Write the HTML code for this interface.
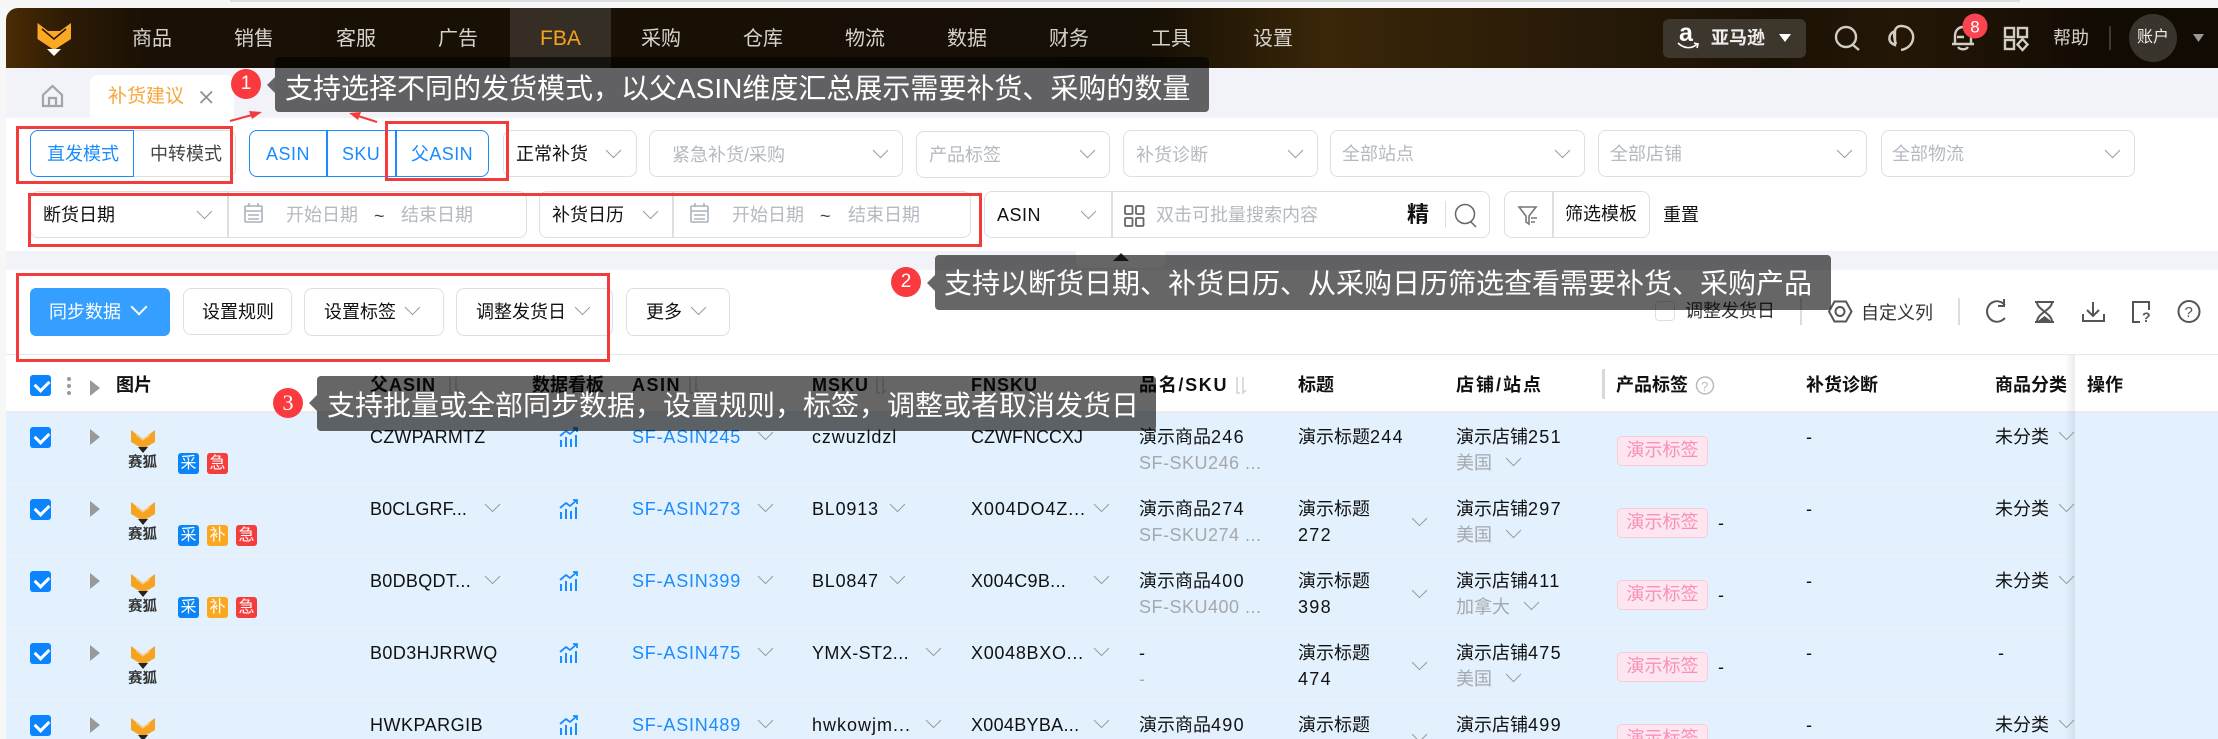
<!DOCTYPE html>
<html lang="zh"><head><meta charset="utf-8"><title>补货建议</title>
<style>
*{box-sizing:border-box;margin:0;padding:0}
html,body{width:2218px;height:739px;overflow:hidden;background:#f7f7f8;font-family:"Liberation Sans","Noto Sans CJK SC",sans-serif;color:#111}
.a,.t,.b,.c,.r,.rb,.tp,.tt,.n{position:absolute}
.t{white-space:nowrap;line-height:24px;height:24px;font-size:18px}
.t em{font-style:normal;letter-spacing:1.3px}
.b{border:1.5px solid #dcdfe6;border-radius:8px;background:#fff}
.c{width:11px;height:11px;border-right:1.8px solid #999;border-bottom:1.8px solid #999;transform:rotate(45deg)}
.g{color:#b4b9c0}
.w{font-weight:700;color:#111}
.l{color:#1a8cff;letter-spacing:.8px}
.s{color:#a5a8ad}
.r{left:6px;width:2212px;height:72px;background:#e2f1fd;border-bottom:2px solid #edf0f4}
.ck{position:absolute;left:24px;width:21px;height:21px;border-radius:3px;background:#0a84ff}
.ck:after{content:"";position:absolute;left:5px;top:3px;width:11px;height:7px;border-left:3px solid #fff;border-bottom:3px solid #fff;transform:rotate(-45deg) translate(-1px,1px)}
.tri{position:absolute;left:84px;width:0;height:0;border-left:10px solid #999;border-top:8px solid transparent;border-bottom:8px solid transparent}
.im{position:absolute;left:110px;top:10px;width:54px;height:54px;border:1px solid #e9eef3}
.im b{position:absolute;left:11px;top:29px;font-size:14.5px;line-height:20px;color:#333;white-space:nowrap}
.im svg{position:absolute;left:13px;top:5px}
.tg{position:absolute;top:40px;width:21px;height:21px;border-radius:3px;color:#fff;font-size:16px;line-height:21px;text-align:center}
.pk{position:absolute;left:1611px;top:23px;width:91px;height:30px;background:#fde6f0;border:1.5px solid #fcc9dd;border-radius:5px;color:#f78fb9;font-size:18px;line-height:27px;text-align:center}
.tp{background:#666;mix-blend-mode:multiply;border-radius:4px}
.tt{color:#fff;font-size:28px;line-height:40px;height:40px;white-space:nowrap}
.n{width:30px;height:30px;border-radius:50%;background:#fa3a3e;color:#fff;text-align:center;font-size:19px;line-height:30px}
.rb{border:3px solid #f33b3b}
</style></head><body>

<div class="a" style="left:230px;top:0;width:1790px;height:2px;background:#ddd"></div>
<div class="a" style="left:6px;top:8px;width:2212px;height:60px;border-top-left-radius:12px;background:linear-gradient(90deg,#4a2c05 0,#2c1b05 60px,#1a1005 140px,#160f05 1140px,#3a2608 1320px,#2a1c08 1540px,#1a1105 1770px,#241706 1890px,#120b03 2100px)"></div>
<div class="a" style="left:510px;top:8px;width:101px;height:60px;background:rgba(255,255,255,.13)"></div>
<div style="color:#d6d3cd;font-size:20px">
<span class="t" style="font-size:20px;left:132px;top:27px">商品</span>
<span class="t" style="font-size:20px;left:234px;top:27px">销售</span>
<span class="t" style="font-size:20px;left:336px;top:27px">客服</span>
<span class="t" style="font-size:20px;left:438px;top:27px">广告</span>
<span class="t" style="font-size:21px;left:540px;top:27px;color:#f6a31e">FBA</span>
<span class="t" style="font-size:20px;left:641px;top:27px">采购</span>
<span class="t" style="font-size:20px;left:743px;top:27px">仓库</span>
<span class="t" style="font-size:20px;left:845px;top:27px">物流</span>
<span class="t" style="font-size:20px;left:947px;top:27px">数据</span>
<span class="t" style="font-size:20px;left:1049px;top:27px">财务</span>
<span class="t" style="font-size:20px;left:1151px;top:27px">工具</span>
<span class="t" style="font-size:20px;left:1253px;top:27px">设置</span>
</div>
<div class="a" style="left:1663px;top:19px;width:143px;height:39px;border-radius:6px;background:#3d362c"></div>
<span class="t" style="left:1711px;top:26px;color:#eee;font-weight:700">亚马逊</span>
<span class="t" style="left:1679px;top:18px;color:#fff;font-weight:700;font-size:25px;line-height:30px;height:30px">a</span>
<span class="t" style="left:2053px;top:26px;color:#d6d3cd">帮助</span>
<div class="a" style="left:2129px;top:14px;width:48px;height:48px;border-radius:50%;background:#3a352c"></div>
<span class="t" style="left:2137px;top:26px;color:#eee;font-size:16px">账户</span>

<!-- tab bar -->
<div class="a" style="left:6px;top:68px;width:2212px;height:50px;background:#f1f3f8"></div>
<div class="a" style="left:90px;top:75px;width:144px;height:43px;background:#fff;border-radius:8px 8px 0 0"></div>
<span class="t" style="left:108px;top:85px;font-size:19px;color:#f6a73a">补货建议</span>

<!-- filters -->
<div class="a" style="left:6px;top:118px;width:2212px;height:133px;background:#fff"></div>
<div class="a" style="left:6px;top:251px;width:2212px;height:19px;background:#f1f3f8"></div>
<div class="a" style="left:1076px;top:251px;width:89px;height:17px;background:#fff;border-radius:0 0 8px 8px"></div>
<div class="a" style="left:1113px;top:253px;border-left:8px solid transparent;border-right:8px solid transparent;border-bottom:8px solid #333"></div>

<div class="b" style="left:30px;top:130px;width:206px;height:47px"></div>
<div class="a" style="left:30px;top:130px;width:104px;height:47px;border:1.5px solid #1a8cff;border-radius:8px 0 0 8px"></div>
<span class="t l" style="left:47px;top:142px;letter-spacing:0">直发模式</span>
<span class="t" style="left:150px;top:142px;color:#444">中转模式</span>
<div class="a" style="left:249px;top:130px;width:240px;height:47px;border:1.5px solid #1a8cff;border-radius:8px"></div>
<div class="a" style="left:326px;top:130px;width:1.5px;height:47px;background:#1a8cff"></div>
<div class="a" style="left:395px;top:130px;width:1.5px;height:47px;background:#1a8cff"></div>
<span class="t l" style="left:266px;top:142px;letter-spacing:.5px">ASIN</span>
<span class="t l" style="left:342px;top:142px;letter-spacing:.4px">SKU</span>
<span class="t l" style="left:411px;top:142px;letter-spacing:.4px">父ASIN</span>

<div class="b" style="left:503px;top:130px;width:134px;height:47px"></div><span class="t" style="left:516px;top:142px">正常补货</span><i class="c" style="left:608px;top:145px"></i>
<div class="b" style="left:649px;top:130px;width:254px;height:47px"></div><span class="t g" style="left:672px;top:143px">紧急补货/采购</span><i class="c" style="left:875px;top:145px"></i>
<div class="b" style="left:916px;top:131px;width:194px;height:47px"></div><span class="t g" style="left:929px;top:143px">产品标签</span><i class="c" style="left:1082px;top:145px"></i>
<div class="b" style="left:1123px;top:130px;width:195px;height:47px"></div><span class="t g" style="left:1136px;top:143px">补货诊断</span><i class="c" style="left:1290px;top:145px"></i>
<div class="b" style="left:1330px;top:130px;width:255px;height:47px"></div><span class="t g" style="left:1342px;top:142px">全部站点</span><i class="c" style="left:1557px;top:145px"></i>
<div class="b" style="left:1598px;top:130px;width:269px;height:47px"></div><span class="t g" style="left:1610px;top:142px">全部店铺</span><i class="c" style="left:1839px;top:145px"></i>
<div class="b" style="left:1881px;top:130px;width:254px;height:47px"></div><span class="t g" style="left:1892px;top:142px">全部物流</span><i class="c" style="left:2107px;top:145px"></i>

<div class="b" style="left:30px;top:191px;width:497px;height:47px"></div>
<div class="a" style="left:227px;top:191px;width:1.5px;height:47px;background:#dcdfe6"></div>
<span class="t" style="left:43px;top:203px">断货日期</span><i class="c" style="left:199px;top:206px"></i>
<span class="t g" style="left:286px;top:203px">开始日期</span><span class="t" style="left:374px;top:204px;color:#444">~</span><span class="t g" style="left:401px;top:203px">结束日期</span>

<div class="b" style="left:539px;top:191px;width:432px;height:47px"></div>
<div class="a" style="left:672px;top:191px;width:1.5px;height:47px;background:#dcdfe6"></div>
<span class="t" style="left:552px;top:203px">补货日历</span><i class="c" style="left:645px;top:206px"></i>
<span class="t g" style="left:732px;top:203px">开始日期</span><span class="t" style="left:820px;top:204px;color:#444">~</span><span class="t g" style="left:848px;top:203px">结束日期</span>

<div class="b" style="left:984px;top:191px;width:506px;height:47px"></div>
<div class="a" style="left:1111px;top:191px;width:1.5px;height:47px;background:#dcdfe6"></div>
<div class="a" style="left:1445px;top:201px;width:1px;height:27px;background:#ddd"></div>
<span class="t" style="left:997px;top:203px;letter-spacing:.5px">ASIN</span><i class="c" style="left:1083px;top:206px"></i>
<span class="t g" style="left:1156px;top:203px">双击可批量搜索内容</span>
<span class="t" style="left:1407px;top:203px;font-size:22px;color:#111;font-weight:700">精</span>

<div class="b" style="left:1504px;top:191px;width:146px;height:47px"></div>
<div class="a" style="left:1552px;top:191px;width:1.5px;height:47px;background:#dcdfe6"></div>
<span class="t" style="left:1565px;top:202px">筛选模板</span>
<span class="t" style="left:1663px;top:203px">重置</span>

<!-- toolbar -->
<div class="a" style="left:6px;top:270px;width:2212px;height:85px;background:#fff;border-bottom:1.5px solid #e6e8ec"></div>
<div class="a" style="left:30px;top:288px;width:140px;height:48px;background:#349fff;border-radius:6px"></div>
<span class="t" style="left:49px;top:300px;color:#fff">同步数据</span>
<i class="c" style="left:133px;top:301px;border-color:#fff;width:12px;height:12px;border-width:2px"></i>
<div class="b" style="left:183px;top:288px;width:109px;height:47px"></div><span class="t" style="left:202px;top:300px">设置规则</span>
<div class="b" style="left:304px;top:288px;width:140px;height:48px"></div><span class="t" style="left:324px;top:300px">设置标签</span><i class="c" style="left:407px;top:302px"></i>
<div class="b" style="left:456px;top:288px;width:157px;height:48px"></div><span class="t" style="left:476px;top:300px">调整发货日</span><i class="c" style="left:577px;top:302px"></i>
<div class="b" style="left:626px;top:288px;width:104px;height:48px"></div><span class="t" style="left:646px;top:300px">更多</span><i class="c" style="left:693px;top:302px"></i>
<div class="b" style="left:1655px;top:301px;width:20px;height:20px;border-radius:4px"></div>
<span class="t" style="left:1685px;top:299px;color:#333">调整发货日</span>
<div class="a" style="left:1800px;top:298px;width:1.5px;height:27px;background:#ddd"></div>
<span class="t" style="left:1861px;top:301px;color:#333">自定义列</span>
<div class="a" style="left:1958px;top:298px;width:1.5px;height:27px;background:#ddd"></div>

<!-- table header -->
<div class="a" style="left:6px;top:355px;width:2212px;height:58px;background:#fff;border-bottom:2.5px solid #e9ebee"></div>
<div class="ck" style="left:30px;top:375px"></div>
<div class="a" style="left:67px;top:377px;width:4px;height:4px;border-radius:50%;background:#999;box-shadow:0 7px #999,0 14px #999"></div>
<div class="tri" style="left:90px;top:380px"></div>
<span class="t w" style="left:116px;top:373px">图片</span>
<span class="t w" style="left:370px;top:373px;letter-spacing:1px">父ASIN</span>
<span class="t w" style="left:532px;top:373px">数据看板</span>
<span class="t w" style="left:632px;top:373px;letter-spacing:1.5px">ASIN</span>
<span class="t w" style="left:812px;top:373px;letter-spacing:1px">MSKU</span>
<span class="t w" style="left:971px;top:373px;letter-spacing:1px">FNSKU</span>
<span class="t w" style="left:1139px;top:373px;letter-spacing:1.7px">品名/SKU</span>
<span class="t w" style="left:1298px;top:373px">标题</span>
<span class="t w" style="left:1456px;top:373px;letter-spacing:2px">店铺/站点</span>
<div class="a" style="left:1602px;top:369px;width:2.5px;height:30px;background:#d5d8dc"></div>
<span class="t w" style="left:1616px;top:373px">产品标签</span>
<span class="t w" style="left:1806px;top:373px">补货诊断</span>
<span class="t w" style="left:1995px;top:373px">商品分类</span>

<!-- rows: offsets inside row = page x - 6 -->
<div class="r" style="top:413px">
 <div class="ck" style="top:14px"></div><div class="tri" style="top:16px"></div>
 <div class="im"><svg width="26" height="25" viewBox="0 0 26 25"><path d="M1 1 13 10 25 1V13L13 20 1 13Z" fill="#f6a321"/><path d="M6 6 13 11 20 6" fill="none" stroke="#fbd28e" stroke-width="1"/><path d="M8 18H18L13 24Z" fill="#222"/></svg><b>赛狐</b></div>
 <span class="tg" style="left:172px;background:#0a84f6">采</span><span class="tg" style="left:201px;background:#f43d3d">急</span>
 <span class="t" style="left:364px;top:12px;letter-spacing:.2px">CZWPARMTZ</span>
 <svg class="a" style="left:553px;top:14px" width="20" height="21" viewBox="0 0 20 21"><use href="#ch"/></svg>
 <span class="t l" style="left:626px;top:12px">SF-ASIN245</span><i class="c" style="left:754px;top:14px"></i>
 <span class="t" style="left:806px;top:12px;letter-spacing:.9px">czwuzldzl</span>
 <span class="t" style="left:965px;top:12px">CZWFNCCXJ</span>
 <span class="t" style="left:1133px;top:12px">演示商品<em>246</em></span><span class="t s" style="left:1133px;top:38px;letter-spacing:.5px">SF-SKU246 ...</span>
 <span class="t" style="left:1292px;top:12px">演示标题<em>244</em></span>
 <span class="t" style="left:1450px;top:12px">演示店铺<em>251</em></span><span class="t s" style="left:1450px;top:38px">美国</span><i class="c" style="left:1502px;top:40px"></i>
 <div class="pk">演示标签</div>
 <span class="t" style="left:1800px;top:12px">-</span>
 <span class="t" style="left:1989px;top:12px">未分类</span><i class="c" style="left:2055px;top:14px"></i>
</div>
<div class="r" style="top:485px">
 <div class="ck" style="top:14px"></div><div class="tri" style="top:16px"></div>
 <div class="im"><svg width="26" height="25" viewBox="0 0 26 25"><path d="M1 1 13 10 25 1V13L13 20 1 13Z" fill="#f6a321"/><path d="M6 6 13 11 20 6" fill="none" stroke="#fbd28e" stroke-width="1"/><path d="M8 18H18L13 24Z" fill="#222"/></svg><b>赛狐</b></div>
 <span class="tg" style="left:172px;background:#0a84f6">采</span><span class="tg" style="left:201px;background:#fba81e">补</span><span class="tg" style="left:230px;background:#f43d3d">急</span>
 <span class="t" style="left:364px;top:12px;letter-spacing:.1px">B0CLGRF...</span><i class="c" style="left:481px;top:14px"></i>
 <svg class="a" style="left:553px;top:14px" width="20" height="21" viewBox="0 0 20 21"><use href="#ch"/></svg>
 <span class="t l" style="left:626px;top:12px">SF-ASIN273</span><i class="c" style="left:754px;top:14px"></i>
 <span class="t" style="left:806px;top:12px;letter-spacing:.8px">BL0913</span><i class="c" style="left:886px;top:14px"></i>
 <span class="t" style="left:965px;top:12px;letter-spacing:.9px">X004DO4Z...</span><i class="c" style="left:1090px;top:14px"></i>
 <span class="t" style="left:1133px;top:12px">演示商品<em>274</em></span><span class="t s" style="left:1133px;top:38px;letter-spacing:.5px">SF-SKU274 ...</span>
 <span class="t" style="left:1292px;top:12px">演示标题</span><span class="t" style="left:1292px;top:38px;letter-spacing:1.3px">272</span><i class="c" style="left:1408px;top:28px"></i>
 <span class="t" style="left:1450px;top:12px">演示店铺<em>297</em></span><span class="t s" style="left:1450px;top:38px">美国</span><i class="c" style="left:1502px;top:40px"></i>
 <div class="pk">演示标签</div><span class="t" style="left:1712px;top:26px">-</span>
 <span class="t" style="left:1800px;top:12px">-</span>
 <span class="t" style="left:1989px;top:12px">未分类</span><i class="c" style="left:2055px;top:14px"></i>
</div>
<div class="r" style="top:557px">
 <div class="ck" style="top:14px"></div><div class="tri" style="top:16px"></div>
 <div class="im"><svg width="26" height="25" viewBox="0 0 26 25"><path d="M1 1 13 10 25 1V13L13 20 1 13Z" fill="#f6a321"/><path d="M6 6 13 11 20 6" fill="none" stroke="#fbd28e" stroke-width="1"/><path d="M8 18H18L13 24Z" fill="#222"/></svg><b>赛狐</b></div>
 <span class="tg" style="left:172px;background:#0a84f6">采</span><span class="tg" style="left:201px;background:#fba81e">补</span><span class="tg" style="left:230px;background:#f43d3d">急</span>
 <span class="t" style="left:364px;top:12px;letter-spacing:.3px">B0DBQDT...</span><i class="c" style="left:481px;top:14px"></i>
 <svg class="a" style="left:553px;top:14px" width="20" height="21" viewBox="0 0 20 21"><use href="#ch"/></svg>
 <span class="t l" style="left:626px;top:12px">SF-ASIN399</span><i class="c" style="left:754px;top:14px"></i>
 <span class="t" style="left:806px;top:12px;letter-spacing:.8px">BL0847</span><i class="c" style="left:886px;top:14px"></i>
 <span class="t" style="left:965px;top:12px;letter-spacing:.3px">X004C9B...</span><i class="c" style="left:1090px;top:14px"></i>
 <span class="t" style="left:1133px;top:12px">演示商品<em>400</em></span><span class="t s" style="left:1133px;top:38px;letter-spacing:.5px">SF-SKU400 ...</span>
 <span class="t" style="left:1292px;top:12px">演示标题</span><span class="t" style="left:1292px;top:38px;letter-spacing:1.3px">398</span><i class="c" style="left:1408px;top:28px"></i>
 <span class="t" style="left:1450px;top:12px">演示店铺<em>411</em></span><span class="t s" style="left:1450px;top:38px">加拿大</span><i class="c" style="left:1520px;top:40px"></i>
 <div class="pk">演示标签</div><span class="t" style="left:1712px;top:26px">-</span>
 <span class="t" style="left:1800px;top:12px">-</span>
 <span class="t" style="left:1989px;top:12px">未分类</span><i class="c" style="left:2055px;top:14px"></i>
</div>
<div class="r" style="top:629px">
 <div class="ck" style="top:14px"></div><div class="tri" style="top:16px"></div>
 <div class="im"><svg width="26" height="25" viewBox="0 0 26 25"><path d="M1 1 13 10 25 1V13L13 20 1 13Z" fill="#f6a321"/><path d="M6 6 13 11 20 6" fill="none" stroke="#fbd28e" stroke-width="1"/><path d="M8 18H18L13 24Z" fill="#222"/></svg><b>赛狐</b></div>
 <span class="t" style="left:364px;top:12px;letter-spacing:.4px">B0D3HJRRWQ</span>
 <svg class="a" style="left:553px;top:14px" width="20" height="21" viewBox="0 0 20 21"><use href="#ch"/></svg>
 <span class="t l" style="left:626px;top:12px">SF-ASIN475</span><i class="c" style="left:754px;top:14px"></i>
 <span class="t" style="left:806px;top:12px;letter-spacing:.4px">YMX-ST2...</span><i class="c" style="left:922px;top:14px"></i>
 <span class="t" style="left:965px;top:12px;letter-spacing:.7px">X0048BXO...</span><i class="c" style="left:1090px;top:14px"></i>
 <span class="t" style="left:1133px;top:12px">-</span><span class="t s" style="left:1133px;top:38px">-</span>
 <span class="t" style="left:1292px;top:12px">演示标题</span><span class="t" style="left:1292px;top:38px;letter-spacing:1.3px">474</span><i class="c" style="left:1408px;top:28px"></i>
 <span class="t" style="left:1450px;top:12px">演示店铺<em>475</em></span><span class="t s" style="left:1450px;top:38px">美国</span><i class="c" style="left:1502px;top:40px"></i>
 <div class="pk">演示标签</div><span class="t" style="left:1712px;top:26px">-</span>
 <span class="t" style="left:1800px;top:12px">-</span>
 <span class="t" style="left:1992px;top:12px">-</span>
</div>
<div class="r" style="top:701px;height:38px;border:0;overflow:hidden">
 <div class="ck" style="top:14px"></div><div class="tri" style="top:16px"></div>
 <div class="im"><svg width="26" height="25" viewBox="0 0 26 25"><path d="M1 1 13 10 25 1V13L13 20 1 13Z" fill="#f6a321"/><path d="M6 6 13 11 20 6" fill="none" stroke="#fbd28e" stroke-width="1"/><path d="M8 18H18L13 24Z" fill="#222"/></svg></div>
 <span class="t" style="left:364px;top:12px;letter-spacing:.5px">HWKPARGIB</span>
 <svg class="a" style="left:553px;top:14px" width="20" height="21" viewBox="0 0 20 21"><use href="#ch"/></svg>
 <span class="t l" style="left:626px;top:12px">SF-ASIN489</span><i class="c" style="left:754px;top:14px"></i>
 <span class="t" style="left:806px;top:12px;letter-spacing:1px">hwkowjm...</span><i class="c" style="left:922px;top:14px"></i>
 <span class="t" style="left:965px;top:12px;letter-spacing:.3px">X004BYBA...</span><i class="c" style="left:1090px;top:14px"></i>
 <span class="t" style="left:1133px;top:12px">演示商品<em>490</em></span>
 <span class="t" style="left:1292px;top:12px">演示标题</span><i class="c" style="left:1408px;top:28px"></i>
 <span class="t" style="left:1450px;top:12px">演示店铺<em>499</em></span>
 <div class="pk">演示标签</div>
 <span class="t" style="left:1800px;top:12px">-</span>
 <span class="t" style="left:1989px;top:12px">未分类</span><i class="c" style="left:2055px;top:14px"></i>
</div>

<!-- fixed column -->
<div class="a" style="left:2065px;top:355px;width:10px;height:384px;background:linear-gradient(90deg,rgba(120,130,150,0),rgba(120,130,150,.16))"></div>
<div class="a" style="left:2075px;top:355px;width:143px;height:58px;background:#fff;border-bottom:2.5px solid #e9ebee"></div>
<div class="a" style="left:2075px;top:413px;width:143px;height:326px;background:#e2f1fd"></div>
<span class="t w" style="left:2087px;top:373px">操作</span>

<!-- icons in page coordinates -->
<svg class="a" style="left:0;top:0" width="2218" height="739" viewBox="0 0 2218 739" fill="none">
 <defs><g id="ch" fill="none" stroke="#1a8cff" stroke-width="1.8"><path d="M1 9 7 4 11 7 18 1M14 1H18V5"/><path d="M2 13V20M7 10V20M12 12V20M17 8V20" stroke-width="2"/></g></defs>
 <!-- logo -->
 <path d="M37.5 23 48 31H60L71 23V39L54 50 37.5 39Z" fill="#fba824"/>
 <path d="M42 29 54 39 66 29" stroke="#2a1a05" stroke-width="1.6"/>
 <path d="M47 49H61L54 56Z" fill="#fff"/>
 <!-- header icons -->
 <path d="M1678 43C1684 49 1692 49 1697 44M1694 43 1698 44 1697 48" stroke="#fff" stroke-width="1.6"/>
 <path d="M1779 34H1791L1785 42Z" fill="#fff"/>
 <path d="M2193 34H2204L2198.5 42Z" fill="#999"/>
 <g stroke="#d2cec6" stroke-width="2.4">
  <circle cx="1846" cy="37" r="10"/><path d="M1853 45 1859 50"/>
  <path d="M1896 44C1892 33 1895 26 1901 26C1909 26 1914 32 1913 39C1912 45 1907 49 1901 50"/>
  <path d="M1895 31C1888 34 1887 42 1895 45V31Z"/>
  <path d="M1952 44H1974M1955 44V36C1955 24 1971 24 1971 36V44M1957 37H1964M1958 47C1960 50 1966 50 1968 47"/>
  <rect x="2005" y="28" width="9" height="9"/><rect x="2018" y="28" width="9" height="9"/><rect x="2005" y="40" width="9" height="9"/><path d="M2022.5 39 2027.5 44.500 2022.5 50 2017.500 44.500Z"/>
 </g>
 <circle cx="1975" cy="26" r="12.500" fill="#fb4450"/>
 <text x="1975" y="32.500" text-anchor="middle" font-size="17" font-family="Liberation Sans" fill="#fff">8</text>
 <path d="M2110 26V50" stroke="#6a655c"/>
 <!-- tab icons -->
 <g stroke="#a2a4a8" stroke-width="2.2"><path d="M43 95 52.500 86 62 95V106H43ZM49 106V98H56V106"/></g>
 <path d="M200.500 91.500 212 103M212 91.500 200.500 103" stroke="#8a9099" stroke-width="1.7"/>
 <!-- calendars -->
 <g stroke="#aab2ba" stroke-width="1.6">
  <rect x="245" y="206" width="17" height="16" rx="1"/><path d="M245 211H262M249 203V207M258 203V207M248 215H259M248 219H259" />
  <rect x="691" y="206" width="17" height="16" rx="1"/><path d="M691 211H708M695 203V207M704 203V207M694 215H705M694 219H705"/>
 </g>
 <!-- search grid -->
 <g stroke="#666" stroke-width="1.8"><rect x="1125" y="206" width="7.500" height="8" rx="1"/><rect x="1136" y="206" width="7.500" height="8" rx="1"/><rect x="1125" y="218" width="7.500" height="8" rx="1"/><rect x="1136" y="218" width="7.500" height="8" rx="1"/></g>
 <g stroke="#666" stroke-width="1.5"><circle cx="1465" cy="214" r="9.500"/><path d="M1471 222 1476 227"/></g>
 <!-- filter -->
 <path d="M1519 207H1536L1529 216V224L1526 222V216Z" stroke="#777" stroke-width="1.6"/><path d="M1531 218H1537M1531 222H1535" stroke="#777" stroke-width="1.6"/>
 <!-- toolbar icons -->
 <g stroke="#555" stroke-width="2">
  <path d="M1834.500 301.500H1846L1851.500 311.500 1846 321.500H1834.500L1829 311.500Z"/><circle cx="1840" cy="311.500" r="4.500"/>
  <path d="M2005 305C1997 297 1987 303 1987 311.500C1987 320 1997 326 2005 318M2004 299V306H1998"/>
  <path d="M2035 302H2054M2035 322H2054M2037 302C2037 310 2052 313 2052 322H2037C2037 313 2052 310 2052 302"/>
  <path d="M2093 302V315M2087 310 2093 316 2099 310M2083 314V321H2104V314"/>
  <path d="M2144 302H2133V322H2140M2149 310V302H2144"/>
  <circle cx="2189" cy="311.500" r="10.500"/>
 </g>
 <path d="M2044.500 316 2038 321H2051Z" fill="#555"/>
 <text x="2142" y="322" font-size="14" font-family="Liberation Sans" fill="#555" font-weight="700">?</text>
 <text x="2184.500" y="317" font-size="15" font-family="Liberation Sans" fill="#555">?</text>
 <!-- help small -->
 <circle cx="1705" cy="385.500" r="8.500" stroke="#bbb" stroke-width="1.5"/>
 <text x="1701" y="391" font-size="13" font-family="Liberation Sans" fill="#bbb">?</text>
 <!-- sort icons -->
 <g stroke="#d0d2d6" stroke-width="1.5">
  <path d="M450 377V393H453M456 377V393L459 390" /><path d="M690 377V393H693M696 377V393L699 390"/><path d="M877 377V393H880M883 377V393L886 390"/><path d="M1237 377V393H1240M1243 377V393L1246 390"/>
 </g>
</svg>

<!-- tooltips -->
<div class="tp" style="left:275px;top:57px;width:934px;height:55px"></div>
<div class="tp" style="left:935px;top:255px;width:896px;height:55px"></div>
<div class="tp" style="left:317px;top:376px;width:839px;height:55px"></div>
<div class="a" style="left:267px;top:77px;border-right:8px solid #666;border-top:8px solid transparent;border-bottom:8px solid transparent"></div>
<div class="a" style="left:927px;top:275px;border-right:8px solid #666;border-top:8px solid transparent;border-bottom:8px solid transparent"></div>
<div class="a" style="left:309px;top:395px;border-right:8px solid #666;border-top:8px solid transparent;border-bottom:8px solid transparent"></div>
<span class="tt" style="left:285px;top:69px">支持选择不同的发货模式，以父ASIN维度汇总展示需要补货、采购的数量</span>
<span class="tt" style="left:944px;top:264px">支持以断货日期、补货日历、从采购日历筛选查看需要补货、采购产品</span>
<span class="tt" style="left:327px;top:386px">支持批量或全部同步数据，设置规则，标签，调整或者取消发货日</span>
<span class="n" style="left:231px;top:69px">1</span>
<span class="n" style="left:891px;top:267px">2</span>
<span class="n" style="left:273px;top:388px;font-family:'Liberation Serif',serif;font-size:22px">3</span>

<!-- red arrows and boxes -->
<svg class="a" style="left:0;top:0" width="2218" height="739" viewBox="0 0 2218 739" fill="none">
 <path d="M230 121 252 115" stroke="#f33b3b" stroke-width="2"/><path d="M262 112 249 111 252 119Z" fill="#f33b3b"/>
 <path d="M377 122 358 116" stroke="#f33b3b" stroke-width="2"/><path d="M349 113 361 112 358 120Z" fill="#f33b3b"/>
</svg>
<div class="rb" style="left:16px;top:126px;width:217px;height:58px"></div>
<div class="rb" style="left:385px;top:121px;width:124px;height:60px"></div>
<div class="rb" style="left:28px;top:193px;width:954px;height:54px"></div>
<div class="rb" style="left:16px;top:273px;width:594px;height:89px"></div>
</body></html>
